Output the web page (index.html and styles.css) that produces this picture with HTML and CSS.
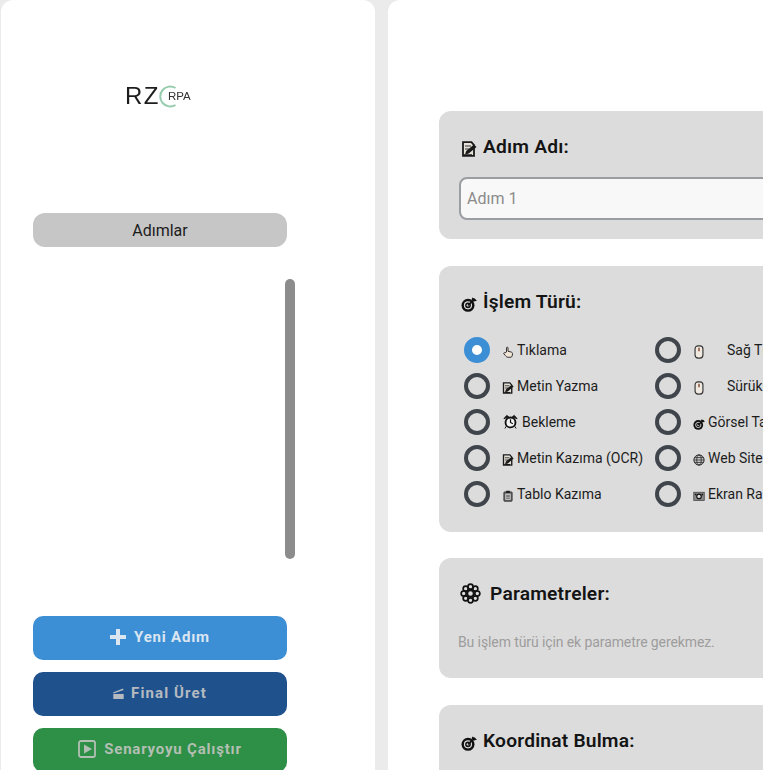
FILE: index.html
```html
<!DOCTYPE html>
<html lang="tr">
<head>
  <meta charset="UTF-8" />
  <title>RZC RPA</title>
  <link rel="stylesheet" href="styles.css">
</head>
<body>
  <svg class="sprite" width="0" height="0">
    <symbol id="i-memo" viewBox="0 0 16 16">
      <path d="M2 1.200h8.500l2.500 3v10.600H2z" fill="#e6e2da" stroke="#1a1a1a" stroke-width="1.800"/>
      <path d="M4 5h6M4 8h4" stroke="#333" stroke-width="1.200"/>
      <path d="M4 13.500l1.200-3.500 7.800-6.500 2.500 2.500-7.800 6.500z" fill="#1a1a1a"/>
      <path d="M3 14h8" stroke="#1a1a1a" stroke-width="1.500"/>
    </symbol>
    <symbol id="i-hand" viewBox="0 0 16 16">
      <path d="M6 8V2.500a1 1 0 0 1 2 0V7l4 1c1.500.4 2 1 2 2.500 0 2-1 4.500-2 4.500H7.500C6 15 5 13 2.500 10.500c-.8-.8 0-2 1.500-1.300z" fill="#f2e6d8" stroke="#222" stroke-width="1.200"/>
    </symbol>
    <symbol id="i-clock" viewBox="0 0 16 16">
      <circle cx="8" cy="9" r="5.300" fill="#f4f4f4" stroke="#111" stroke-width="2"/>
      <path d="M8 5.500V9l2.500 1.500" fill="none" stroke="#111" stroke-width="1.300"/>
      <path d="M1 5l3-3.500 2 1.500zM15 5l-3-3.500-2 1.500zM3.500 13l-1.500 2.500M12.500 13l1.500 2.500" fill="#111" stroke="#111"/>
    </symbol>
    <symbol id="i-clip" viewBox="0 0 16 16">
      <rect x="2.500" y="2.500" width="11" height="12.500" rx="1" fill="#666" stroke="#222"/>
      <rect x="4.500" y="5" width="7" height="8" fill="#ddd"/>
      <path d="M5.500 7h5M5.500 9h5M5.500 11h5" stroke="#333"/>
      <rect x="5.500" y="1" width="5" height="3" fill="#222"/>
    </symbol>
    <symbol id="i-mouse" viewBox="0 0 12 16">
      <rect x="1.500" y="1" width="9" height="14" rx="3.500" fill="#efe9e0" stroke="#333" stroke-width="1.300"/>
      <path d="M6 3v4" stroke="#7a3a20" stroke-width="1.500"/>
    </symbol>
    <symbol id="i-dart" viewBox="0 0 16 16">
      <circle cx="7" cy="9.300" r="6.500" fill="#111"/>
      <circle cx="7" cy="9.300" r="3.500" fill="none" stroke="#ddd" stroke-width="1.200"/>
      <circle cx="7" cy="9.300" r="1.300" fill="#ddd"/>
      <path d="M7 9.300L14 3" stroke="#111" stroke-width="1.800"/>
      <path d="M11.500 1.500l4.500 3-2.500 1-3-2z" fill="#111"/>
    </symbol>
    <symbol id="i-globe" viewBox="0 0 16 16">
      <circle cx="8" cy="8" r="6.800" fill="#ccc" stroke="#222" stroke-width="1.300"/>
      <ellipse cx="8" cy="8" rx="3" ry="6.800" fill="none" stroke="#222"/>
      <path d="M1.500 8h13M2.500 4.800h11M2.500 11.200h11" stroke="#222"/>
    </symbol>
    <symbol id="i-cam" viewBox="0 0 16 16">
      <rect x="1" y="3" width="14" height="11" fill="#888" stroke="#444"/>
      <circle cx="8" cy="8.500" r="3" fill="#ddd" stroke="#111" stroke-width="1.500"/>
      <rect x="2.500" y="5" width="2" height="2" fill="#111"/>
      <rect x="11.500" y="5" width="2" height="2" fill="#111"/>
    </symbol>
    <symbol id="i-gear" viewBox="0 0 20 20">
      <g fill="none" stroke="#111" stroke-width="1.600">
        <circle cx="10" cy="10" r="3"/>
        <circle cx="10" cy="3.500" r="2.400"/>
        <circle cx="10" cy="16.500" r="2.400"/>
        <circle cx="3.500" cy="10" r="2.400"/>
        <circle cx="16.500" cy="10" r="2.400"/>
        <circle cx="5.400" cy="5.400" r="2.400"/>
        <circle cx="14.600" cy="5.400" r="2.400"/>
        <circle cx="5.400" cy="14.600" r="2.400"/>
        <circle cx="14.600" cy="14.600" r="2.400"/>
      </g>
    </symbol>
  </svg>

  <div class="app">
    <aside class="sidebar">
      <div class="logo">
        <svg width="70" height="30" viewBox="0 0 70 30">
          <text class="logo-rz" x="0" y="23">RZ</text>
          <path d="M50.500 7a10 10 0 1 0 0 17" fill="none" stroke="#96ccae" stroke-width="2"/>
          <text class="logo-rpa" x="43" y="19">RPA</text>
        </svg>
      </div>
      <div class="steps-title">Adımlar</div>
      <div class="steps-list"><div class="scroll-thumb"></div></div>
      <button class="btn btn-new">
        <svg class="btn-plus" width="16" height="16" viewBox="0 0 16 16"><path d="M6 0h4v6h6v4h-6v6H6v-6H0V6h6z" fill="currentColor"/></svg>
        Yeni Adım
      </button>
      <button class="btn btn-final">
        <svg width="11" height="11" viewBox="0 0 11 11"><path d="M0 4.500L10 .500l.6 1.500L.6 5.500zM.3 6h10.400v5H.3z" fill="currentColor"/></svg>
        Final Üret
      </button>
      <button class="btn btn-run">
        <svg width="18" height="18" viewBox="0 0 18 18"><rect x="1" y="1" width="16" height="16" rx="2" fill="none" stroke="currentColor" stroke-width="1.800"/><path d="M6 4.500l8 4.500-8 4.500z" fill="currentColor"/></svg>
        Senaryoyu Çalıştır
      </button>
    </aside>

    <main class="content">
      <section class="card">
        <h2 class="card-title"><svg class="title-icon"><use href="#i-memo"/></svg>Adım Adı:</h2>
        <input class="text-input" type="text" placeholder="Adım 1" />
      </section>

      <section class="card card-radios">
        <h2 class="card-title"><svg class="title-icon"><use href="#i-dart"/></svg>İşlem Türü:</h2>
        <div class="radio-grid">
          <label class="radio-row"><span class="radio checked"></span><svg class="opt-icon"><use href="#i-hand"/></svg>Tıklama</label>
          <label class="radio-row"><span class="radio"></span><svg class="opt-icon wide"><use href="#i-mouse"/></svg>Sağ Tıklama</label>
          <label class="radio-row"><span class="radio"></span><svg class="opt-icon"><use href="#i-memo"/></svg>Metin Yazma</label>
          <label class="radio-row"><span class="radio"></span><svg class="opt-icon wide"><use href="#i-mouse"/></svg>Sürükle</label>
          <label class="radio-row"><span class="radio"></span><svg class="opt-icon clock"><use href="#i-clock"/></svg>Bekleme</label>
          <label class="radio-row"><span class="radio"></span><svg class="opt-icon"><use href="#i-dart"/></svg>Görsel Tanıma</label>
          <label class="radio-row"><span class="radio"></span><svg class="opt-icon"><use href="#i-memo"/></svg>Metin Kazıma (OCR)</label>
          <label class="radio-row"><span class="radio"></span><svg class="opt-icon"><use href="#i-globe"/></svg>Web Sitesi</label>
          <label class="radio-row"><span class="radio"></span><svg class="opt-icon"><use href="#i-clip"/></svg>Tablo Kazıma</label>
          <label class="radio-row"><span class="radio"></span><svg class="opt-icon"><use href="#i-cam"/></svg>Ekran Ra</label>
        </div>
      </section>

      <section class="card">
        <h2 class="card-title"><svg class="title-icon gear"><use href="#i-gear"/></svg>Parametreler:</h2>
        <p class="hint">Bu işlem türü için ek parametre gerekmez.</p>
      </section>

      <section class="card">
        <h2 class="card-title"><svg class="title-icon"><use href="#i-dart"/></svg>Koordinat Bulma:</h2>
      </section>
    </main>
  </div>
</body>
</html>
```

FILE: styles.css
```css
* {
  box-sizing: border-box;
  margin: 0;
  padding: 0;
}

html, body {
  width: 763px;
  height: 770px;
  overflow: hidden;
}

body {
  font-family: Roboto, sans-serif;
  background: #ebebeb;
  color: #1c1c1c;
}

.sprite { display: block; height: 0; }

.app {
  display: flex;
  gap: 13px;
  width: 1100px;
  height: 770px;
  padding-left: 1px;
}

/* left column */
.sidebar {
  width: 374px;
  height: 900px;
  flex: none;
  background: #fff;
  border-radius: 12px;
  padding: 0 32px;
  display: flex;
  flex-direction: column;
}

.logo {
  width: 254px;
  height: 213px;
  padding: 81px 0 0 92px;
}

.logo svg { filter: blur(0.3px); }

.logo-rz {
  font-family: "Liberation Sans", sans-serif;
  font-size: 24px;
  letter-spacing: 1.500px;
  fill: #1d1d1d;
}

.logo-rpa {
  font-family: "Liberation Sans", sans-serif;
  font-size: 11.500px;
  fill: #333;
}

.steps-title {
  width: 254px;
  height: 34px;
  line-height: 35px;
  text-align: center;
  font-size: 16px;
  background: #c6c6c6;
  border-radius: 12px;
}

.steps-list {
  width: 262px;
  height: 369px;
  padding-top: 32px;
  display: flex;
  justify-content: flex-end;
}

.scroll-thumb {
  width: 10px;
  height: 280px;
  background: #8c8c8c;
  border-radius: 5px;
}

.btn {
  width: 254px;
  height: 44px;
  flex: none;
  margin-bottom: 12px;
  padding-bottom: 2px;
  border: 0;
  border-radius: 10px;
  font-family: Roboto, sans-serif;
  font-size: 15px;
  font-weight: 700;
  letter-spacing: 0.8px;
  display: flex;
  align-items: center;
  justify-content: center;
  gap: 8px;
}

.btn-new { background: #3d8fd5; color: #dbe6f1; }
.btn-final { background: #1f528d; color: #b5bac1; gap: 7px; letter-spacing: 1.100px; }
.btn-run { background: #2e8f47; color: #b3bfb3; }

/* right column */
.content {
  width: 700px;
  flex: none;
  height: 900px;
  background: #fff;
  border-radius: 12px;
  padding: 111px 0 0 51px;
}

.card {
  background: #dcdcdc;
  border-radius: 12px;
  padding: 20px 20px 19px;
  margin-bottom: 26.500px;
}

.card-radios { padding-bottom: 20px; }

.card-title {
  display: flex;
  align-items: center;
  height: 31px;
  margin-bottom: 15px;
  font-size: 19.200px;
  font-weight: 600;
  letter-spacing: 0.2px;
  color: #141414;
}

.title-icon {
  width: 16px;
  height: 16px;
  margin: 5px 6px 0 2px;
  flex: none;
}

.title-icon.gear {
  width: 21px;
  height: 21px;
  margin: 0 9px 0 1px;
}

.text-input {
  display: block;
  width: 100%;
  height: 43px;
  padding: 0 6px;
  border: 2px solid #9a9da1;
  border-radius: 8px;
  background: #f8f8f8;
  font-family: Roboto, sans-serif;
  font-size: 16px;
}

.text-input::placeholder { color: #8b8b8b; }

.radio-grid {
  display: grid;
  grid-template-columns: 191px 1fr;
  grid-auto-rows: 36px;
  padding-left: 5px;
}

.radio-row {
  display: flex;
  align-items: center;
  font-size: 14px;
  white-space: nowrap;
}

.radio {
  width: 26px;
  height: 26px;
  flex: none;
  border: 4px solid #3f454b;
  border-radius: 50%;
  margin-right: 12px;
}

.radio.checked {
  border: 8px solid #3d8fd5;
  background: #fff;
}

.opt-icon {
  width: 12px;
  height: 12px;
  flex: none;
  margin: 4px 3px 0 0;
}

.opt-icon.wide {
  height: 14px;
  margin-right: 22px;
}

.opt-icon.clock {
  width: 15px;
  height: 15px;
  margin: 0 4px 0 1px;
}

.hint {
  font-size: 14px;
  letter-spacing: -0.1px;
  color: #9d9d9d;
  height: 35px;
  line-height: 36px;
  margin-left: -1px;
}
```
